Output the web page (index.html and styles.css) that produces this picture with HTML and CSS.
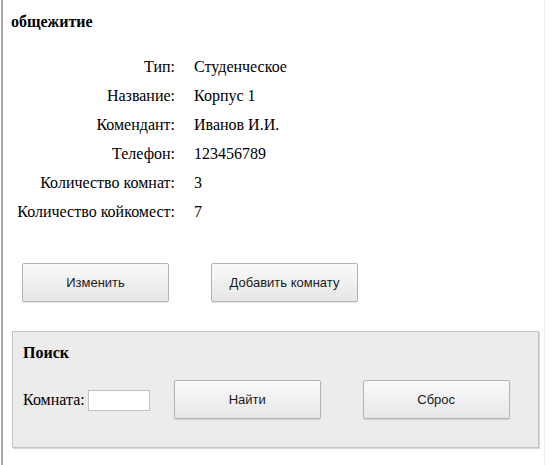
FILE: index.html
```html
<!DOCTYPE html>
<html>
<head>
<meta charset="utf-8">
<link rel="stylesheet" href="styles.css">
</head>
<body>
<div class="page">
  <h1 class="title">общежитие</h1>
  <div class="info">
    <div class="lbl">Тип:</div><div class="val">Студенческое</div>
    <div class="lbl">Название:</div><div class="val">Корпус 1</div>
    <div class="lbl">Комендант:</div><div class="val">Иванов И.И.</div>
    <div class="lbl">Телефон:</div><div class="val">123456789</div>
    <div class="lbl">Количество комнат:</div><div class="val">3</div>
    <div class="lbl">Количество койкомест:</div><div class="val">7</div>
  </div>
  <div class="actions">
    <button class="btn">Изменить</button>
    <button class="btn">Добавить комнату</button>
  </div>
  <div class="search">
    <h2 class="search-title">Поиск</h2>
    <div class="search-row">
      <label class="room-label">Комната: <input class="room-input" type="text"></label>
      <button class="btn btn-find">Найти</button>
      <button class="btn btn-reset">Сброс</button>
    </div>
  </div>
</div>
</body>
</html>
```
FILE: styles.css
```css
html, body {
  margin: 0;
  padding: 0;
  background: #fff;
}
.page {
  margin-left: 1px;
  width: 544px;
  height: 465px;
  box-sizing: border-box;
  border-left: 2px solid #a8a8a8;
  border-right: 1px solid #ececec;
  font-family: "Liberation Serif", "Times New Roman", serif;
  color: #000;
  padding-top: 13px;
}
.title {
  margin: 0 0 0 8px;
  font-size: 16px;
  font-weight: bold;
  line-height: 18px;
}
.info {
  display: grid;
  grid-template-columns: 172px auto;
  column-gap: 19px;
  grid-auto-rows: 29px;
  margin-top: 21px;
  font-size: 16px;
  line-height: 29px;
}
.lbl {
  text-align: right;
}
.actions {
  display: flex;
  gap: 42px;
  margin: 37px 0 0 19px;
}
.btn {
  width: 147px;
  height: 39px;
  box-sizing: border-box;
  border: 1px solid #b4b4b4;
  border-radius: 2px;
  background: linear-gradient(#fafafa, #e6e6e6);
  box-shadow: 0 1px 1px rgba(0,0,0,0.12);
  font-family: "Liberation Sans", Arial, sans-serif;
  font-size: 13px;
  color: #1a1a1a;
  padding: 0;
}
.search {
  margin: 29px 0 0 9px;
  width: 527px;
  height: 117px;
  box-sizing: border-box;
  background: #ececec;
  border: 1px solid #c4c4c4;
  box-shadow: 1px 1px 0 #d8d8d8;
  padding: 11px 0 0 10px;
}
.search-title {
  margin: 0;
  font-size: 16px;
  font-weight: bold;
  line-height: 20px;
}
.search-row {
  display: flex;
  align-items: center;
  margin-top: 17px;
}
.room-label {
  font-size: 16px;
  display: flex;
  align-items: center;
  gap: 3px;
}
.room-input {
  width: 62px;
  height: 21px;
  box-sizing: border-box;
  border: 1px solid #c2c2c2;
  background: #fff;
  padding: 0;
  margin-top: 1px;
}
.btn-find {
  margin-left: 24px;
}
.btn-reset {
  margin-left: 42px;
}
```
